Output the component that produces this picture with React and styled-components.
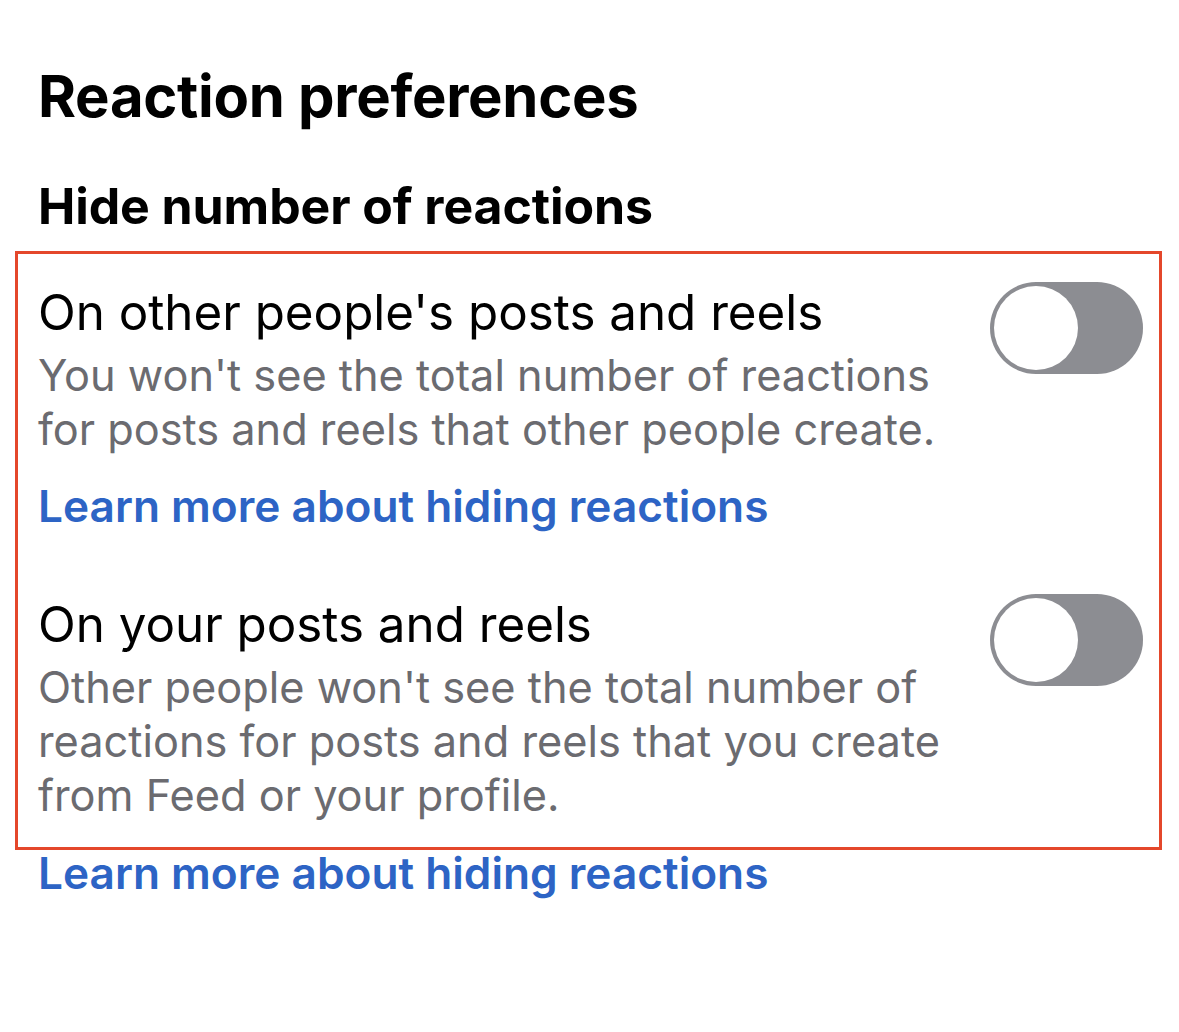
import React from "react";
import styled, { createGlobalStyle } from "styled-components";

const Global = createGlobalStyle`
  html, body { margin: 0; padding: 0; background: #fff; }
  body { font-family: Inter, "Noto Sans", sans-serif; -webkit-font-smoothing: antialiased; }
`;

const Page = styled.div`
  width: 1179px;
  height: 1032px;
  box-sizing: border-box;
  padding: 61px 17px 0 15px;
  background: #fff;
`;

const Title = styled.h1`
  margin: 0 0 0 23px;
  font-size: 58px;
  line-height: 70px;
  font-weight: 700;
  color: #000;
  letter-spacing: -0.3px;
`;

const Subtitle = styled.h2`
  margin: 45px 0 0 23px;
  font-size: 50px;
  line-height: 60px;
  font-weight: 700;
  color: #000;
  letter-spacing: -0.1px;
`;

const Highlight = styled.div`
  margin-top: 15px;
  border: 3px solid #e4472b;
  padding: 28px 16px 25px 20px;
  display: flex;
  flex-direction: column;
  gap: 61px;
`;

const Row = styled.div`
  display: flex;
  align-items: flex-start;
  justify-content: space-between;
  gap: 20px;
`;

const Text = styled.div`
  display: flex;
  flex-direction: column;
`;

const ItemTitle = styled.div`
  font-size: 49.3px;
  line-height: 60px;
  font-weight: 400;
  color: #000;
`;

const Desc = styled.div`
  margin-top: 6px;
  font-size: 43.3px;
  line-height: 54px;
  font-weight: 400;
  color: #6b6b70;
`;

const Link = styled.a`
  display: block;
  font-size: 44.2px;
  line-height: 54px;
  font-weight: 600;
  color: #2d64c5;
  text-decoration: none;
  margin-top: ${(p) => p.$top || 0}px;
  margin-left: ${(p) => p.$left || 0}px;
`;

const Track = styled.div`
  flex: none;
  width: 153px;
  height: 92px;
  border-radius: 46px;
  background: #8c8d92;
  box-sizing: border-box;
  padding: 4px;
  display: flex;
  align-items: center;
`;

const Knob = styled.div`
  width: 84px;
  height: 84px;
  border-radius: 50%;
  background: #fff;
`;

const Toggle = () => (
  <Track>
    <Knob />
  </Track>
);

export default function App() {
  return (
    <>
      <Global />
      <Page>
        <Title>Reaction preferences</Title>
        <Subtitle>Hide number of reactions</Subtitle>
        <Highlight>
          <Row>
            <Text>
              <ItemTitle>On other people's posts and reels</ItemTitle>
              <Desc>
                You won't see the total number of reactions
                <br />
                for posts and reels that other people create.
              </Desc>
              <Link href="#" $top={23}>Learn more about hiding reactions</Link>
            </Text>
            <Toggle />
          </Row>
          <Row>
            <Text>
              <ItemTitle>On your posts and reels</ItemTitle>
              <Desc>
                Other people won't see the total number of
                <br />
                reactions for posts and reels that you create
                <br />
                from Feed or your profile.
              </Desc>
            </Text>
            <Toggle />
          </Row>
        </Highlight>
        <Link href="#" $left={23} $top={-4}>Learn more about hiding reactions</Link>
      </Page>
    </>
  );
}
